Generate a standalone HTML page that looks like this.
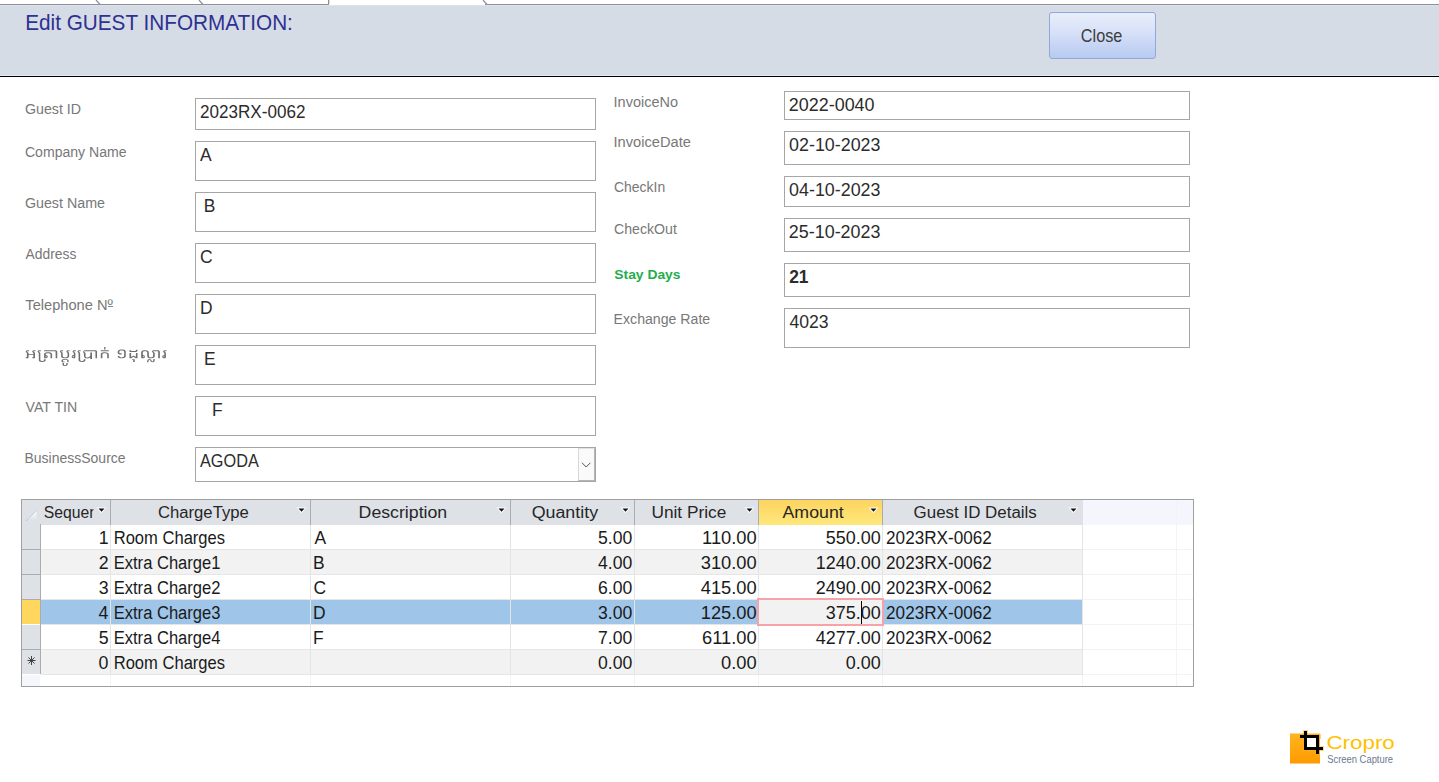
<!DOCTYPE html>
<html><head><meta charset="utf-8"><style>
html,body{margin:0;padding:0;width:1439px;height:782px;overflow:hidden;background:#fff;position:relative;font-family:"Liberation Sans",sans-serif}
.box{position:absolute;border:1px solid #A6A6A6;background:#fff}
svg text{font-family:"Liberation Sans",sans-serif}
</style></head><body>
<div style="position:absolute;left:0;top:4px;width:1439px;height:1px;background:#8C919A"></div>
<div style="position:absolute;left:329px;top:4px;width:156px;height:1px;background:#fff"></div>
<div style="position:absolute;left:0;top:5px;width:1439px;height:70px;background:#D6DCE6"></div>
<div style="position:absolute;left:0;top:5px;width:1439px;height:1px;background:#DEE3EB"></div>
<div style="position:absolute;left:0;top:75px;width:1439px;height:1px;background:#E4E9F2"></div>
<div style="position:absolute;left:0;top:76px;width:1439px;height:1px;background:#000"></div>
<div style="position:absolute;left:1049px;top:12px;width:105px;height:45px;border:1px solid #8FA9DC;border-radius:3px;background:linear-gradient(#E9EEFB,#D6E0F8 45%,#B7CAF1)"></div>
<div class="box" style="left:195px;top:98px;width:399px;height:30px;"></div><div class="box" style="left:195px;top:141px;width:399px;height:38px;"></div><div class="box" style="left:195px;top:192px;width:399px;height:38px;"></div><div class="box" style="left:195px;top:243px;width:399px;height:38px;"></div><div class="box" style="left:195px;top:294px;width:399px;height:38px;"></div><div class="box" style="left:195px;top:345px;width:399px;height:38px;"></div><div class="box" style="left:195px;top:396px;width:399px;height:38px;"></div><div class="box" style="left:195px;top:447px;width:399px;height:33px;"></div><div class="box" style="left:784px;top:91px;width:404px;height:27px;"></div><div class="box" style="left:784px;top:131px;width:404px;height:32px;"></div><div class="box" style="left:784px;top:176px;width:404px;height:29px;"></div><div class="box" style="left:784px;top:218px;width:404px;height:32px;"></div><div class="box" style="left:784px;top:263px;width:404px;height:32px;"></div><div class="box" style="left:784px;top:308px;width:404px;height:38px;"></div>
<div style="position:absolute;left:578px;top:448px;width:15px;height:31px;background:#FAFAFA;border-left:1px solid #D8D8D8;border-top:1px solid #E2E2E2;border-right:1px solid #B4B4B4;border-bottom:1px solid #B4B4B4"></div>
<div style="position:absolute;left:21px;top:499px;width:1171px;height:186px;border:1px solid #A0A0A0;background:#fff"></div><div style="position:absolute;left:22px;top:500px;width:1061px;height:25px;background:#DEE2E7"></div><div style="position:absolute;left:1083px;top:500px;width:110px;height:25px;background:#F5F6FD"></div><div style="position:absolute;left:759px;top:500px;width:123px;height:25px;background:linear-gradient(#FDD460,#FEE87C)"></div><div style="position:absolute;left:41px;top:525px;width:1041px;height:24px;background:#FFFFFF"></div><div style="position:absolute;left:41px;top:549px;width:1042px;height:1px;background:#E6E6E6"></div><div style="position:absolute;left:1083px;top:549px;width:110px;height:1px;background:#F3F3F5"></div><div style="position:absolute;left:22px;top:525px;width:18px;height:24px;background:#DEE2E7"></div><div style="position:absolute;left:22px;top:549px;width:19px;height:1px;background:#A9ADB3"></div><div style="position:absolute;left:41px;top:550px;width:1041px;height:24px;background:#F2F2F2"></div><div style="position:absolute;left:41px;top:574px;width:1042px;height:1px;background:#E6E6E6"></div><div style="position:absolute;left:1083px;top:574px;width:110px;height:1px;background:#F3F3F5"></div><div style="position:absolute;left:22px;top:550px;width:18px;height:24px;background:#DEE2E7"></div><div style="position:absolute;left:22px;top:574px;width:19px;height:1px;background:#A9ADB3"></div><div style="position:absolute;left:41px;top:575px;width:1041px;height:24px;background:#FFFFFF"></div><div style="position:absolute;left:41px;top:599px;width:1042px;height:1px;background:#E6E6E6"></div><div style="position:absolute;left:1083px;top:599px;width:110px;height:1px;background:#F3F3F5"></div><div style="position:absolute;left:22px;top:575px;width:18px;height:24px;background:#DEE2E7"></div><div style="position:absolute;left:22px;top:599px;width:19px;height:1px;background:#A9ADB3"></div><div style="position:absolute;left:41px;top:600px;width:1041px;height:24px;background:#9FC5E8"></div><div style="position:absolute;left:41px;top:624px;width:1042px;height:1px;background:#E6E6E6"></div><div style="position:absolute;left:1083px;top:624px;width:110px;height:1px;background:#F3F3F5"></div><div style="position:absolute;left:22px;top:600px;width:18px;height:24px;background:#FFD75E"></div><div style="position:absolute;left:41px;top:625px;width:1041px;height:24px;background:#FFFFFF"></div><div style="position:absolute;left:41px;top:649px;width:1042px;height:1px;background:#E6E6E6"></div><div style="position:absolute;left:1083px;top:649px;width:110px;height:1px;background:#F3F3F5"></div><div style="position:absolute;left:22px;top:625px;width:18px;height:24px;background:#DEE2E7"></div><div style="position:absolute;left:22px;top:649px;width:19px;height:1px;background:#A9ADB3"></div><div style="position:absolute;left:41px;top:650px;width:1041px;height:24px;background:#F2F2F2"></div><div style="position:absolute;left:41px;top:674px;width:1042px;height:1px;background:#E6E6E6"></div><div style="position:absolute;left:1083px;top:674px;width:110px;height:1px;background:#F3F3F5"></div><div style="position:absolute;left:22px;top:650px;width:18px;height:24px;background:#DEE2E7"></div><div style="position:absolute;left:22px;top:675px;width:18px;height:11px;background:#F5F6FC"></div><div style="position:absolute;left:40px;top:524px;width:1px;height:150px;background:#A9ADB3"></div><div style="position:absolute;left:110px;top:500px;width:1px;height:25px;background:#A9ADB3"></div><div style="position:absolute;left:110px;top:525px;width:1px;height:150px;background:#E4E4E4"></div><div style="position:absolute;left:110px;top:675px;width:1px;height:11px;background:#F4F4F4"></div><div style="position:absolute;left:310px;top:500px;width:1px;height:25px;background:#A9ADB3"></div><div style="position:absolute;left:310px;top:525px;width:1px;height:150px;background:#E4E4E4"></div><div style="position:absolute;left:310px;top:675px;width:1px;height:11px;background:#F4F4F4"></div><div style="position:absolute;left:510px;top:500px;width:1px;height:25px;background:#A9ADB3"></div><div style="position:absolute;left:510px;top:525px;width:1px;height:150px;background:#E4E4E4"></div><div style="position:absolute;left:510px;top:675px;width:1px;height:11px;background:#F4F4F4"></div><div style="position:absolute;left:634px;top:500px;width:1px;height:25px;background:#A9ADB3"></div><div style="position:absolute;left:634px;top:525px;width:1px;height:150px;background:#E4E4E4"></div><div style="position:absolute;left:634px;top:675px;width:1px;height:11px;background:#F4F4F4"></div><div style="position:absolute;left:758px;top:500px;width:1px;height:25px;background:#A9ADB3"></div><div style="position:absolute;left:758px;top:525px;width:1px;height:150px;background:#E4E4E4"></div><div style="position:absolute;left:758px;top:675px;width:1px;height:11px;background:#F4F4F4"></div><div style="position:absolute;left:882px;top:500px;width:1px;height:25px;background:#A9ADB3"></div><div style="position:absolute;left:882px;top:525px;width:1px;height:150px;background:#E4E4E4"></div><div style="position:absolute;left:882px;top:675px;width:1px;height:11px;background:#F4F4F4"></div><div style="position:absolute;left:1082px;top:525px;width:1px;height:150px;background:#E4E4E4"></div><div style="position:absolute;left:1082px;top:675px;width:1px;height:11px;background:#F4F4F4"></div><div style="position:absolute;left:1176px;top:500px;width:1px;height:186px;background:#F3F3F6"></div><div style="position:absolute;left:757px;top:598px;width:123px;height:24px;border:2px solid #F5A3A9;background:#F2F2F2"></div><div style="position:absolute;left:861px;top:601px;width:1px;height:23px;background:#000"></div>
<svg width="1439" height="782" style="position:absolute;left:0;top:0">
<defs><clipPath id="c29"><rect x="0" y="0" width="93.5" height="782"/></clipPath></defs>
<path d="M96 0 L100 4.5 M199 0 L203 4.5 M483 0 L487 4.5" stroke="#8C919A" stroke-width="1.2" fill="none"/>
<path d="M328.5 0 V4.5" stroke="#8C919A" stroke-width="1" fill="none"/>
<rect x="329" y="0" width="1" height="4" fill="#EBD9C2"/>
<rect x="108" y="306" width="5" height="1" fill="#8A8A8A"/>
<path d="M582 462.8 L586.2 467 L590.4 462.8" stroke="#4a4a4a" stroke-width="0.95" fill="none"/>
<path d="M96.5 507.5 L106.5 507.5 L101.5 513.2 Z" fill="#fff"/><path d="M98.5 508.6 L104.5 508.6 L101.5 511.8 Z" fill="#111"/><path d="M296.5 507.5 L306.5 507.5 L301.5 513.2 Z" fill="#fff"/><path d="M298.5 508.6 L304.5 508.6 L301.5 511.8 Z" fill="#111"/><path d="M496.5 507.5 L506.5 507.5 L501.5 513.2 Z" fill="#fff"/><path d="M498.5 508.6 L504.5 508.6 L501.5 511.8 Z" fill="#111"/><path d="M620.5 507.5 L630.5 507.5 L625.5 513.2 Z" fill="#fff"/><path d="M622.5 508.6 L628.5 508.6 L625.5 511.8 Z" fill="#111"/><path d="M744.5 507.5 L754.5 507.5 L749.5 513.2 Z" fill="#fff"/><path d="M746.5 508.6 L752.5 508.6 L749.5 511.8 Z" fill="#111"/><path d="M868.5 507.5 L878.5 507.5 L873.5 513.2 Z" fill="#fff"/><path d="M870.5 508.6 L876.5 508.6 L873.5 511.8 Z" fill="#111"/><path d="M1068.5 507.5 L1078.5 507.5 L1073.5 513.2 Z" fill="#fff"/><path d="M1070.5 508.6 L1076.5 508.6 L1073.5 511.8 Z" fill="#111"/><linearGradient id="sg" x1="0" y1="0" x2="0" y2="1"><stop offset="0" stop-color="#FFFFFF"/><stop offset="1" stop-color="#DDE0E6"/></linearGradient><path d="M26.5 520.5 L36.5 510.5 L36.5 520.5 Z" fill="url(#sg)"/><path d="M26.3 520.7 L36.8 510.2" stroke="#9AB6EA" stroke-width="0.9" stroke-dasharray="1 0.6"/><g stroke="#444" stroke-width="1"><path d="M31.5 656 V665 M27.5 660.5 H35.5 M28.5 657.5 L34.5 663.5 M34.5 657.5 L28.5 663.5"/></g>
<path d="M62.51 363.09 62.51 364.69 62.80 365.30 63.30 365.68 63.99 365.91 65.67 365.98 66.56 365.83 67.36 365.37 67.65 364.84 67.65 363.09 66.27 363.09 66.27 364.54 65.57 365.15 64.58 365.15 64.09 364.84 63.99 363.09ZM132.16 359.21 132.16 359.97 133.15 360.05 133.15 362.02 134.74 362.02 134.74 359.21ZM147.11 362.25 148.49 362.25 148.69 360.35 149.38 359.82 150.07 360.20 150.87 361.57 151.46 362.10 152.84 362.25 153.64 362.02 154.13 361.64 154.63 360.81 154.82 358.98 153.44 358.98 153.34 360.50 152.65 361.42 152.25 361.42 151.85 361.11 151.06 359.67 150.37 359.13 149.08 358.98 148.39 359.21 147.70 359.74 147.30 360.50ZM61.62 360.12 61.52 361.72 62.01 362.18 64.58 362.25 64.58 361.57 63.20 361.57 62.90 361.34 63.00 360.27 63.79 359.74 66.07 359.67 66.76 359.89 67.26 360.43 67.26 362.25 68.64 362.25 68.54 360.05 67.85 359.44 65.97 358.98 63.60 359.06 62.31 359.44ZM129.49 353.04 129.49 358.30 131.37 358.30 133.45 356.77 135.63 358.30 137.51 358.30 137.51 353.04 135.92 353.04 135.83 357.08 133.55 355.40 131.18 357.08 131.08 353.04ZM101.19 353.35 100.80 354.11 100.80 358.30 102.38 358.30 102.38 354.34 102.98 353.58 103.97 353.27 105.65 353.27 106.34 353.42 106.93 353.81 107.23 354.34 107.23 358.30 108.81 358.30 108.81 354.11 107.92 352.89 106.74 352.44 103.97 352.28 102.38 352.59ZM44.60 353.12 44.10 353.96 44.10 357.76 44.50 358.14 46.18 358.30 46.87 358.07 47.47 357.61 47.76 356.77 47.66 356.01 47.17 355.40 45.69 354.95 45.69 354.19 46.28 353.50 47.07 353.20 48.95 353.20 50.14 353.65 50.53 354.26 50.53 358.30 52.12 358.30 52.12 354.19 51.82 353.42 51.03 352.74 49.54 352.28 47.27 352.21 45.88 352.44ZM45.78 356.01 46.08 356.01 46.58 356.39 46.58 356.93 46.08 357.31 45.69 357.23ZM166.40 350.23 164.22 350.23 163.04 351.52 163.13 351.90 164.32 353.12 164.32 355.02 162.84 355.48 162.34 356.01 162.24 357.08 162.54 357.69 163.53 358.22 165.11 358.30 165.91 357.76 165.91 352.82 164.22 351.22 166.40 351.14ZM164.12 356.01 164.32 356.09 164.32 357.23 163.93 357.31 163.43 357.00 163.43 356.39ZM141.37 351.67 141.17 352.59 141.17 357.38 141.37 357.92 141.86 358.22 143.64 358.22 144.53 357.69 144.83 357.15 144.63 355.71 144.04 355.25 142.85 354.95 142.85 352.13 143.64 351.37 145.03 351.14 145.82 351.22 147.01 351.83 147.20 352.28 147.20 356.32 147.70 357.38 149.18 358.14 151.95 358.30 153.73 357.76 154.23 357.38 154.72 356.24 154.72 352.89 152.94 351.22 156.70 351.14 157.89 351.37 158.19 351.75 158.19 358.30 159.87 358.30 159.87 351.90 159.47 350.76 158.58 350.30 152.94 350.23 151.85 351.45 151.85 351.83 153.14 353.12 153.04 356.47 152.45 357.08 150.96 357.38 149.48 357.08 148.89 356.47 148.79 351.98 148.39 351.22 147.80 350.76 145.82 350.23 143.64 350.30 142.06 350.84ZM142.95 356.01 143.35 356.09 143.74 356.47 143.74 356.85 143.25 357.31 142.85 357.23ZM100.80 350.23 100.80 351.14 108.81 351.14 108.81 350.23ZM84.37 350.23 83.19 351.52 82.99 352.05 83.88 353.20 83.98 356.62 84.97 357.92 86.06 358.37 87.54 358.45 88.63 358.22 90.21 357.46 90.31 358.90 91.99 358.90 91.99 352.44 90.31 352.51 90.31 355.94 90.01 356.32 88.03 357.38 86.65 357.46 85.86 357.00 85.56 356.47 85.56 353.04 84.18 351.67 84.18 351.37 84.47 351.14 93.97 351.14 95.16 351.37 95.46 351.75 95.46 358.30 97.04 358.30 97.04 351.37 96.45 350.53 95.36 350.23ZM78.44 350.23 77.25 351.67 78.54 353.04 78.54 360.12 78.73 360.73 79.53 361.49 80.51 361.87 82.49 362.02 83.88 361.80 84.57 361.49 85.36 360.73 85.46 359.13 83.88 359.13 83.78 360.35 82.69 361.04 81.11 360.96 80.22 360.20 80.12 352.82 78.44 351.22 80.61 351.14 80.61 350.23ZM75.77 350.23 73.59 350.23 72.50 351.45 72.60 351.98 73.79 353.12 73.79 354.95 72.70 355.25 72.01 355.71 71.61 356.77 71.91 357.61 72.50 358.07 73.29 358.30 74.78 358.22 75.37 357.61 75.37 352.89 73.59 351.22 75.77 351.14ZM73.49 356.01 73.79 356.09 73.69 357.31 73.29 357.31 72.80 356.93 72.90 356.32ZM60.92 350.23 59.93 351.29 59.84 351.83 61.12 353.12 61.12 356.55 61.62 357.38 62.70 357.99 64.19 358.30 66.56 358.22 68.05 357.76 68.84 357.08 69.14 356.32 69.14 352.82 67.45 351.22 69.53 351.14 69.53 350.23 67.36 350.23 66.27 351.45 66.46 352.05 67.55 353.12 67.55 356.16 66.76 357.08 65.08 357.38 63.79 357.23 62.90 356.62 62.70 356.24 62.70 352.82 60.92 351.29 61.02 351.14 63.10 351.14 63.10 350.23ZM44.10 350.23 44.10 351.14 54.10 351.14 55.18 351.29 55.58 351.67 55.68 358.30 57.26 358.30 57.26 351.67 57.06 351.07 56.57 350.53 55.48 350.23ZM38.56 350.23 37.47 351.45 37.47 351.83 38.76 353.12 38.86 360.65 39.55 361.42 40.64 361.87 41.73 362.02 43.81 361.87 44.60 361.57 45.39 360.96 45.69 360.27 45.69 359.13 44.10 359.13 44.00 360.27 43.11 360.96 41.63 361.04 40.64 360.58 40.34 360.05 40.34 352.89 38.66 351.22 40.84 351.14 40.84 350.23ZM26.79 350.23 25.60 351.67 26.89 353.04 26.89 357.08 25.60 357.38 25.60 358.30 27.78 358.30 28.47 357.92 28.67 355.10 33.32 355.10 33.42 356.93 32.92 357.31 32.13 357.38 32.13 358.30 34.21 358.30 34.80 358.07 35.00 357.76 35.00 352.82 33.22 351.22 35.40 351.14 35.40 350.23 33.22 350.23 32.13 351.45 32.23 351.98 33.42 353.12 33.42 354.03 33.22 354.19 28.67 354.19 28.57 352.89 26.79 351.22 28.96 351.14 28.96 350.23ZM137.51 349.77 135.92 349.77 135.92 350.61 135.23 350.99 131.18 350.99 131.08 350.15 129.49 350.15 129.49 351.90 135.92 351.90 136.72 351.75 137.31 351.37 137.51 350.91ZM119.50 349.70 118.21 350.38 117.72 351.22 117.72 353.20 118.02 353.73 118.51 354.11 119.50 354.41 121.68 354.41 121.68 353.35 119.99 353.35 119.40 353.04 119.30 351.45 119.90 350.76 120.79 350.46 122.96 350.53 123.95 351.14 124.15 351.67 124.15 356.09 123.95 356.62 123.36 357.08 122.57 357.31 121.18 357.38 119.99 357.08 119.50 356.70 119.30 356.01 117.72 356.01 117.92 357.00 118.71 357.76 120.19 358.22 122.47 358.30 123.95 358.07 125.14 357.46 125.73 356.39 125.73 351.29 125.54 350.84 124.84 350.08 123.16 349.54 120.79 349.47ZM104.16 346.96 104.16 349.39 105.45 349.39 105.45 346.96Z" fill="#6E6E6E" fill-rule="evenodd"/>
<linearGradient id="og" x1="0" y1="0" x2="0" y2="1"><stop offset="0" stop-color="#FFB420"/><stop offset="1" stop-color="#FF9A00"/></linearGradient>
<rect x="1290" y="733.5" width="30" height="30" fill="url(#og)"/>
<g fill="#FFB21C" opacity="0.55"><rect x="1299" y="734" width="22" height="5"/><rect x="1303" y="730" width="5" height="21"/><rect x="1315" y="734" width="5" height="21"/><rect x="1303" y="746" width="21" height="5"/></g>
<rect x="1307" y="738" width="9" height="9" fill="#fff"/>
<g fill="#000"><rect x="1304" y="731" width="3" height="19"/><rect x="1300" y="735" width="19" height="3"/><rect x="1316" y="735" width="3" height="19"/><rect x="1304" y="747" width="19" height="3"/></g>
<text x="25.18" y="30.00" font-size="21.35" fill="#2E3192" textLength="267.72" lengthAdjust="spacingAndGlyphs">Edit GUEST INFORMATION:</text><text x="1080.84" y="42.00" font-size="17.43" fill="#3C3C3C" textLength="41.44" lengthAdjust="spacingAndGlyphs">Close</text><text x="24.93" y="114.00" font-size="14.09" fill="#787878" textLength="56.16" lengthAdjust="spacingAndGlyphs">Guest ID</text><text x="24.94" y="157.00" font-size="14.09" fill="#787878" textLength="101.63" lengthAdjust="spacingAndGlyphs">Company Name</text><text x="24.93" y="208.00" font-size="14.09" fill="#787878" textLength="80.05" lengthAdjust="spacingAndGlyphs">Guest Name</text><text x="25.60" y="259.00" font-size="14.09" fill="#787878" textLength="50.83" lengthAdjust="spacingAndGlyphs">Address</text><text x="25.37" y="310.00" font-size="14.09" fill="#787878" textLength="87.51" lengthAdjust="spacingAndGlyphs">Telephone Nº</text><text x="25.60" y="412.00" font-size="14.09" fill="#787878" textLength="51.54" lengthAdjust="spacingAndGlyphs">VAT TIN</text><text x="24.51" y="463.00" font-size="14.09" fill="#787878" textLength="101.06" lengthAdjust="spacingAndGlyphs">BusinessSource</text><text x="613.57" y="107.00" font-size="14.09" fill="#787878" textLength="64.42" lengthAdjust="spacingAndGlyphs">InvoiceNo</text><text x="613.56" y="147.00" font-size="14.09" fill="#787878" textLength="77.34" lengthAdjust="spacingAndGlyphs">InvoiceDate</text><text x="614.05" y="192.00" font-size="14.09" fill="#787878" textLength="51.14" lengthAdjust="spacingAndGlyphs">CheckIn</text><text x="614.04" y="234.00" font-size="14.09" fill="#787878" textLength="62.81" lengthAdjust="spacingAndGlyphs">CheckOut</text><text x="613.60" y="324.00" font-size="14.09" fill="#787878" textLength="96.58" lengthAdjust="spacingAndGlyphs">Exchange Rate</text><text x="614.28" y="279.00" font-size="13.65" fill="#22AE4C" textLength="66.28" lengthAdjust="spacingAndGlyphs" font-weight="bold">Stay Days</text><text x="200.00" y="118.00" font-size="17.43" fill="#2C2C2C" textLength="105.39" lengthAdjust="spacingAndGlyphs">2023RX-0062</text><text x="200.00" y="161.00" font-size="17.43" fill="#2C2C2C" textLength="11.63" lengthAdjust="spacingAndGlyphs">A</text><text x="203.64" y="212.00" font-size="17.43" fill="#2C2C2C" textLength="11.63" lengthAdjust="spacingAndGlyphs">B</text><text x="199.98" y="263.00" font-size="17.43" fill="#2C2C2C" textLength="12.59" lengthAdjust="spacingAndGlyphs">C</text><text x="200.04" y="314.00" font-size="17.43" fill="#2C2C2C" textLength="12.59" lengthAdjust="spacingAndGlyphs">D</text><text x="203.94" y="365.00" font-size="17.43" fill="#2C2C2C" textLength="11.63" lengthAdjust="spacingAndGlyphs">E</text><text x="211.94" y="416.00" font-size="17.43" fill="#2C2C2C" textLength="10.65" lengthAdjust="spacingAndGlyphs">F</text><text x="200.00" y="467.00" font-size="17.43" fill="#2C2C2C" textLength="58.82" lengthAdjust="spacingAndGlyphs">AGODA</text><text x="788.86" y="111.00" font-size="17.43" fill="#2C2C2C" textLength="85.69" lengthAdjust="spacingAndGlyphs">2022-0040</text><text x="789.14" y="151.00" font-size="17.43" fill="#2C2C2C" textLength="91.28" lengthAdjust="spacingAndGlyphs">02-10-2023</text><text x="789.14" y="196.00" font-size="17.43" fill="#2C2C2C" textLength="91.28" lengthAdjust="spacingAndGlyphs">04-10-2023</text><text x="788.86" y="238.00" font-size="17.43" fill="#2C2C2C" textLength="91.56" lengthAdjust="spacingAndGlyphs">25-10-2023</text><text x="789.16" y="283.00" font-size="17.43" fill="#2C2C2C" textLength="19.38" lengthAdjust="spacingAndGlyphs" font-weight="bold">21</text><text x="789.42" y="328.00" font-size="17.43" fill="#2C2C2C" textLength="39.19" lengthAdjust="spacingAndGlyphs">4023</text><text x="43.71" y="517.80" font-size="16.41" fill="#262626" textLength="70.96" lengthAdjust="spacingAndGlyphs" clip-path="url(#c29)">Sequence</text><text x="157.97" y="517.80" font-size="16.41" fill="#262626" textLength="90.81" lengthAdjust="spacingAndGlyphs">ChargeType</text><text x="358.62" y="517.80" font-size="16.41" fill="#262626" textLength="88.63" lengthAdjust="spacingAndGlyphs">Description</text><text x="531.66" y="517.80" font-size="16.41" fill="#262626" textLength="66.44" lengthAdjust="spacingAndGlyphs">Quantity</text><text x="651.42" y="517.80" font-size="16.41" fill="#262626" textLength="74.88" lengthAdjust="spacingAndGlyphs">Unit Price</text><text x="782.50" y="517.80" font-size="16.41" fill="#262626" textLength="61.19" lengthAdjust="spacingAndGlyphs">Amount</text><text x="913.61" y="517.80" font-size="16.41" fill="#262626" textLength="123.17" lengthAdjust="spacingAndGlyphs">Guest ID Details</text><text x="98.83" y="544.00" font-size="17.43" fill="#1a1a1a" textLength="9.89" lengthAdjust="spacingAndGlyphs">1</text><text x="113.71" y="544.00" font-size="17.43" fill="#1a1a1a" textLength="111.35" lengthAdjust="spacingAndGlyphs">Room Charges</text><text x="314.40" y="544.00" font-size="17.43" fill="#1a1a1a" textLength="11.63" lengthAdjust="spacingAndGlyphs">A</text><text x="598.08" y="544.00" font-size="17.43" fill="#1a1a1a" textLength="34.26" lengthAdjust="spacingAndGlyphs">5.00</text><text x="702.09" y="544.00" font-size="17.43" fill="#1a1a1a" textLength="54.62" lengthAdjust="spacingAndGlyphs">110.00</text><text x="825.84" y="544.00" font-size="17.43" fill="#1a1a1a" textLength="54.91" lengthAdjust="spacingAndGlyphs">550.00</text><text x="886.10" y="544.00" font-size="17.43" fill="#1a1a1a" textLength="105.63" lengthAdjust="spacingAndGlyphs">2023RX-0062</text><text x="98.83" y="569.00" font-size="17.43" fill="#1a1a1a" textLength="9.89" lengthAdjust="spacingAndGlyphs">2</text><text x="113.71" y="569.00" font-size="17.43" fill="#1a1a1a" textLength="106.76" lengthAdjust="spacingAndGlyphs">Extra Charge1</text><text x="313.04" y="569.00" font-size="17.43" fill="#1a1a1a" textLength="11.63" lengthAdjust="spacingAndGlyphs">B</text><text x="598.08" y="569.00" font-size="17.43" fill="#1a1a1a" textLength="34.26" lengthAdjust="spacingAndGlyphs">4.00</text><text x="700.73" y="569.00" font-size="17.43" fill="#1a1a1a" textLength="55.97" lengthAdjust="spacingAndGlyphs">310.00</text><text x="815.85" y="569.00" font-size="17.43" fill="#1a1a1a" textLength="64.89" lengthAdjust="spacingAndGlyphs">1240.00</text><text x="886.10" y="569.00" font-size="17.43" fill="#1a1a1a" textLength="105.63" lengthAdjust="spacingAndGlyphs">2023RX-0062</text><text x="98.83" y="594.00" font-size="17.43" fill="#1a1a1a" textLength="9.89" lengthAdjust="spacingAndGlyphs">3</text><text x="113.71" y="594.00" font-size="17.43" fill="#1a1a1a" textLength="106.76" lengthAdjust="spacingAndGlyphs">Extra Charge2</text><text x="313.58" y="594.00" font-size="17.43" fill="#1a1a1a" textLength="12.59" lengthAdjust="spacingAndGlyphs">C</text><text x="598.08" y="594.00" font-size="17.43" fill="#1a1a1a" textLength="34.26" lengthAdjust="spacingAndGlyphs">6.00</text><text x="700.73" y="594.00" font-size="17.43" fill="#1a1a1a" textLength="55.97" lengthAdjust="spacingAndGlyphs">415.00</text><text x="815.85" y="594.00" font-size="17.43" fill="#1a1a1a" textLength="64.89" lengthAdjust="spacingAndGlyphs">2490.00</text><text x="886.10" y="594.00" font-size="17.43" fill="#1a1a1a" textLength="105.63" lengthAdjust="spacingAndGlyphs">2023RX-0062</text><text x="98.56" y="619.00" font-size="17.43" fill="#1a1a1a" textLength="9.89" lengthAdjust="spacingAndGlyphs">4</text><text x="113.71" y="619.00" font-size="17.43" fill="#1a1a1a" textLength="106.76" lengthAdjust="spacingAndGlyphs">Extra Charge3</text><text x="313.04" y="619.00" font-size="17.43" fill="#1a1a1a" textLength="12.59" lengthAdjust="spacingAndGlyphs">D</text><text x="598.08" y="619.00" font-size="17.43" fill="#1a1a1a" textLength="34.26" lengthAdjust="spacingAndGlyphs">3.00</text><text x="700.73" y="619.00" font-size="17.43" fill="#1a1a1a" textLength="55.97" lengthAdjust="spacingAndGlyphs">125.00</text><text x="825.84" y="619.00" font-size="17.43" fill="#1a1a1a" textLength="54.91" lengthAdjust="spacingAndGlyphs">375.00</text><text x="886.10" y="619.00" font-size="17.43" fill="#1a1a1a" textLength="105.63" lengthAdjust="spacingAndGlyphs">2023RX-0062</text><text x="98.83" y="644.00" font-size="17.43" fill="#1a1a1a" textLength="9.89" lengthAdjust="spacingAndGlyphs">5</text><text x="113.71" y="644.00" font-size="17.43" fill="#1a1a1a" textLength="106.76" lengthAdjust="spacingAndGlyphs">Extra Charge4</text><text x="313.04" y="644.00" font-size="17.43" fill="#1a1a1a" textLength="10.65" lengthAdjust="spacingAndGlyphs">F</text><text x="598.08" y="644.00" font-size="17.43" fill="#1a1a1a" textLength="34.26" lengthAdjust="spacingAndGlyphs">7.00</text><text x="702.09" y="644.00" font-size="17.43" fill="#1a1a1a" textLength="54.62" lengthAdjust="spacingAndGlyphs">611.00</text><text x="815.85" y="644.00" font-size="17.43" fill="#1a1a1a" textLength="64.89" lengthAdjust="spacingAndGlyphs">4277.00</text><text x="886.10" y="644.00" font-size="17.43" fill="#1a1a1a" textLength="105.63" lengthAdjust="spacingAndGlyphs">2023RX-0062</text><text x="98.56" y="669.00" font-size="17.43" fill="#1a1a1a" textLength="9.89" lengthAdjust="spacingAndGlyphs">0</text><text x="113.71" y="669.00" font-size="17.43" fill="#1a1a1a" textLength="111.35" lengthAdjust="spacingAndGlyphs">Room Charges</text><text x="598.08" y="669.00" font-size="17.43" fill="#1a1a1a" textLength="34.26" lengthAdjust="spacingAndGlyphs">0.00</text><text x="721.09" y="669.00" font-size="17.43" fill="#1a1a1a" textLength="35.62" lengthAdjust="spacingAndGlyphs">0.00</text><text x="845.81" y="669.00" font-size="17.43" fill="#1a1a1a" textLength="34.94" lengthAdjust="spacingAndGlyphs">0.00</text><text x="1326.45" y="748.80" font-size="19.17" fill="#FFC000" textLength="68.35" lengthAdjust="spacingAndGlyphs">Cropro</text><text x="1327.21" y="762.90" font-size="10.17" fill="#6B7A90" textLength="65.88" lengthAdjust="spacingAndGlyphs">Screen Capture</text>
</svg>
</body></html>
